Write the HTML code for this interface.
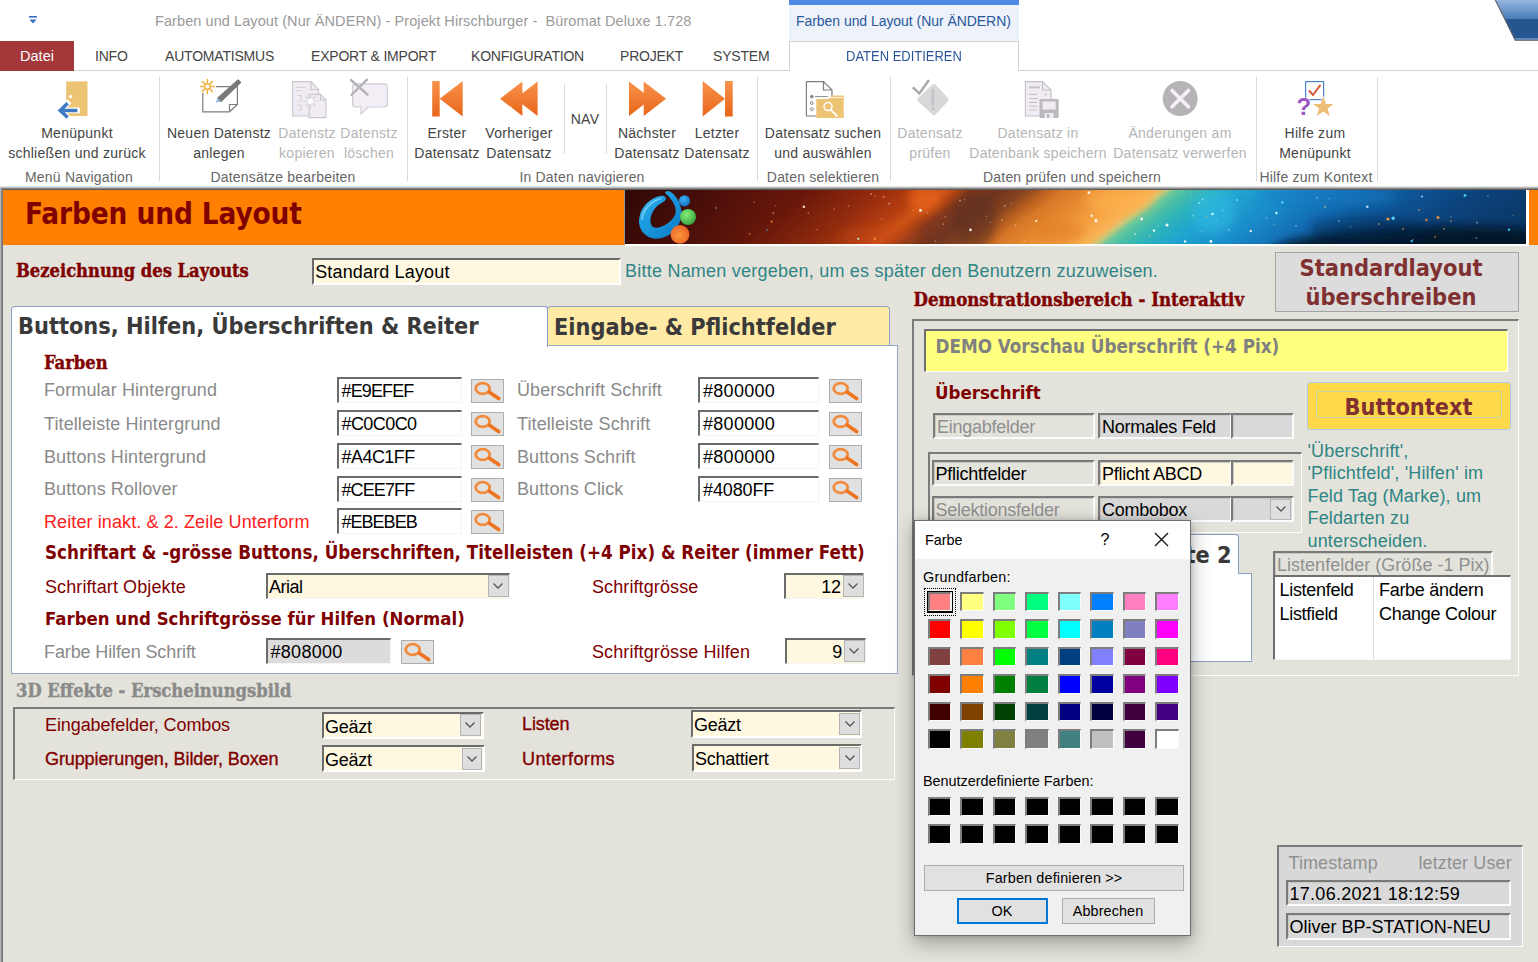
<!DOCTYPE html>
<html lang="de">
<head>
<meta charset="utf-8">
<title>Farben und Layout</title>
<style>
*{box-sizing:border-box;margin:0;padding:0}
html,body{width:1538px;height:962px;overflow:hidden;background:#E3E3DB}
body{position:relative;font-family:"Liberation Sans",sans-serif;color:#000}
.a{position:absolute;white-space:nowrap}
/* ---------- title bar / ribbon ---------- */
#titlebar{left:0;top:0;width:1538px;height:41px;background:#fff}
#ribbon{left:0;top:41px;width:1538px;height:145px;background:#fff}
.seg{font-family:"Liberation Sans",sans-serif}
#wtitle{left:155px;top:13px;font-size:14.5px;color:#9a9a9a;letter-spacing:0.08px}
#ctxhead{left:789px;top:0;width:230px;height:41px;background:#EEF3FB;border-top:5px solid #4F8BE6}
#ctxhead span{left:7px;top:8px;font-size:14px;color:#2B579A;letter-spacing:-0.05px}
#datei{left:0;top:41px;width:74px;height:30px;background:#A4373A;color:#fff;font-size:14.5px;text-align:center;line-height:31px}
.tab{top:41px;height:30px;line-height:31px;font-size:14px;color:#444;letter-spacing:-0.2px}
#tabline{left:0;top:70px;width:1538px;height:1px;background:#D4D4D4}
#acttab{left:789px;top:41px;width:230px;height:30px;background:#fff;border:1px solid #D4D4D4;border-bottom:none;text-align:center;line-height:28.5px;font-size:15px;letter-spacing:0;color:#2B579A}
#acttab span{display:inline-block;transform:scaleX(0.865);transform-origin:50% 50%}
.gsep{top:77px;width:1px;height:104px;background:#DADADA}
.glab{top:168.8px;font-size:14px;letter-spacing:0.2px;color:#666;text-align:center;transform:translateX(-50%)}
.rb{top:122.5px;font-size:14px;letter-spacing:0.27px;line-height:20px;color:#444;text-align:center;transform:translateX(-50%)}
.rb.dis{color:#b5b5b5}
#ribshadow{left:0;top:186px;width:1538px;height:4px;background:linear-gradient(#f6f6f6 0,#d4d4d4 25%,#a4a4a4 50%,#6c6c6c 75%,#4c4c4c 100%)}
.ico{position:absolute}
/* ---------- form ---------- */
#form{left:0;top:190px;width:1538px;height:772px;background:#E3E3DB}
#leftedge{left:0;top:188px;width:3px;height:774px;background:linear-gradient(90deg,#c2c2be 0,#a2a2a0 42%,#727272 58%,#7a7a7a 88%,#bcbcb6 100%)}

.tb{font-family:"DejaVu Sans Condensed","DejaVu Sans",sans-serif;font-weight:700}
.sb{font-family:"DejaVu Serif Condensed","DejaVu Serif",serif;font-weight:700;-webkit-text-stroke:0.4px currentColor}
.th{font-family:"Liberation Sans",sans-serif;font-size:18px;letter-spacing:0.1px}
.dr{color:#800000}
.gr{color:#8a8a8a}
.inp{position:absolute;border-style:solid;border-width:2px 1px 1px 2px;border-color:#6b6b6b #f4f4f4 #f4f4f4 #6b6b6b;background:#fff;font-family:"Liberation Sans",sans-serif;font-size:18px;line-height:24.5px;padding-left:3px;white-space:nowrap;overflow:hidden;letter-spacing:-0.25px}
.cream{background:#FFF8E1}
.hx{letter-spacing:-0.85px}
.e3{border-width:2px;border-color:#6b6b6b #fff #fff #6b6b6b}
.sbtn{position:absolute;width:33px;height:24px;background:#E1E1E1;border:1px solid #ADADAD}
.sbtn svg{position:absolute;left:2px;top:1px}
.dd{position:absolute;background:#DEDEDE;border:1px solid #B4B4B4}
.dd svg{position:absolute;left:50%;top:50%;transform:translate(-50%,-50%)}
#hdr{left:3px;top:190px;width:622px;height:55px;background:#FF8000}
#hdrtxt{left:25px;top:195.5px;font-size:29.4px;line-height:36px;color:#800000;letter-spacing:-0.1px}
#hdrimg{border-left:1.5px solid #8a97a6;left:624px;top:190px;width:902px;height:54px;overflow:hidden;background:#5a120c}
#hdrr{left:1528.7px;top:190px;width:9.3px;height:55px;background:#FF8000}
#tabpage{left:10.5px;top:345.2px;width:887.2px;height:329px;background:#fff;border:1.4px solid #94A7C8}
#tab1{left:11px;top:306px;width:537px;height:41px;background:#fff;border:1px solid #8A9FC4;border-bottom:none;border-radius:4px 4px 0 0}
#tab2{left:546.5px;top:306px;width:343.5px;height:40px;background:#FFEBA6;border:1px solid #8FA3C6;border-bottom:none;border-radius:4px 4px 0 0}
.tabt{font-size:23.3px;line-height:30px;color:#3a3a3a}
.h2{font-size:18.6px;letter-spacing:0.03px;line-height:24px;color:#800000}
.sh{font-size:18.2px;line-height:24px}
.box3d{position:absolute;border-style:solid;border-width:2px 1px 1px 2px;border-color:#7b7b7b #fff #fff #7b7b7b}

.lbl3d{position:absolute;border-style:solid;border-width:2px 2px 2px 2px;border-color:#7a7a7a #fbfbfb #fbfbfb #7a7a7a;font-family:"Liberation Sans",sans-serif;font-size:18px;line-height:24.5px;padding-left:2px;white-space:nowrap;overflow:hidden;letter-spacing:-0.25px;box-shadow:inset 1px 1px 0 #c9c9c4}
#stdbtn{left:1274.5px;top:251.5px;width:244px;height:60px;background:#DCDCDC;border:1px solid #a3a3a3;text-align:center;font-size:23.4px;line-height:29px;color:#803030;padding-top:1px;padding-right:11px}
#demobox{left:912px;top:319px;width:607px;height:357px}
#demohead{left:923.5px;top:329px;width:584px;height:43px;background:#FFFF80;border-style:solid;border-width:2px 1px 1px 2px;border-color:#6f6f6f #fff #fff #6f6f6f}
#btnouter{left:1306.5px;top:381.5px;width:204px;height:48px;background:#FFD94A;border:1.5px solid #A9CBE6;border-radius:3px}
#btninner{left:1316px;top:390.5px;width:186px;height:27px;background:#FFD94A;border:1px solid #C6D3A4;border-radius:2px}

#dlg{left:914.5px;top:521px;width:275px;height:413.8px;background:#F0F0F0;box-shadow:0 0 0 1px #6e6e6e,0 6px 18px 2px rgba(0,0,0,.3),0 0 6px rgba(0,0,0,.22)}
#dlgtitle{left:0;top:0;width:275px;height:37.5px;background:#fff}
.dt{font-family:"Liberation Sans",sans-serif;font-size:14.4px;color:#000;letter-spacing:0.25px}
.sw{position:absolute;width:23.5px;height:19.5px;border-style:solid;border-width:2px 1px 1px 2px;border-color:#7d7d7d #fbfbfb #fbfbfb #7d7d7d}
.wbtn{position:absolute;background:#E1E1E1;border:1px solid #ADADAD;text-align:center;font-family:"Liberation Sans",sans-serif;font-size:14.4px;letter-spacing:0.3px}
</style>
</head>
<body>
<!-- ===== TITLE BAR ===== -->
<div class="a" id="titlebar"></div>
<div class="a seg" id="wtitle">Farben und Layout (Nur ÄNDERN) - Projekt Hirschburger -&nbsp; Büromat Deluxe 1.728</div>
<svg class="ico" style="left:28px;top:15px" width="10" height="10" viewBox="0 0 10 10"><rect x="1" y="1" width="8" height="1.6" fill="#3A6FC4"/><path d="M1.5 4.5h7L5 8.5z" fill="#3A6FC4"/></svg>
<div class="a" id="ctxhead"><span class="a">Farben und Layout (Nur ÄNDERN)</span></div>
<svg class="ico" style="left:1490px;top:0" width="48" height="42" viewBox="1490 0 48 42"><defs><linearGradient id="tr" x1="0" y1="0" x2="0" y2="40.6" gradientUnits="userSpaceOnUse"><stop offset="0" stop-color="#95B5E1"/><stop offset="0.46" stop-color="#4B7CB7"/><stop offset="0.465" stop-color="#26568F"/><stop offset="0.94" stop-color="#26568F"/><stop offset="0.95" stop-color="#6C95CA"/><stop offset="1" stop-color="#6C95CA"/></linearGradient></defs><path d="M1495.3 0H1538V40.2H1515.4Z" fill="url(#tr)"/><path d="M1495.1 -0.4L1515.2 40.2H1538" stroke="#5a5d66" stroke-width="1.1" fill="none"/></svg>
<!-- ===== RIBBON ===== -->
<div class="a" id="ribbon"></div>
<div class="a" id="tabline"></div>
<div class="a seg" id="datei">Datei</div>
<div class="a tab" style="left:95px">INFO</div>
<div class="a tab" style="left:165px">AUTOMATISMUS</div>
<div class="a tab" style="left:311px">EXPORT &amp; IMPORT</div>
<div class="a tab" style="left:471px">KONFIGURATION</div>
<div class="a tab" style="left:620px">PROJEKT</div>
<div class="a tab" style="left:713px">SYSTEM</div>
<div class="a" id="acttab"><span>DATEN EDITIEREN</span></div>
<div class="a rb" style="left:77px">Menüpunkt<br>schließen und zurück</div>
<div class="a rb" style="left:219px">Neuen Datenstz<br>anlegen</div>
<div class="a rb dis" style="left:307px">Datenstz<br>kopieren</div>
<div class="a rb dis" style="left:369px">Datenstz<br>löschen</div>
<div class="a rb" style="left:447px">Erster<br>Datensatz</div>
<div class="a rb" style="left:519px">Vorheriger<br>Datensatz</div>
<div class="a rb" style="left:647px">Nächster<br>Datensatz</div>
<div class="a rb" style="left:717px">Letzter<br>Datensatz</div>
<div class="a rb" style="left:823px">Datensatz suchen<br>und auswählen</div>
<div class="a rb dis" style="left:930px">Datensatz<br>prüfen</div>
<div class="a rb dis" style="left:1038px">Datensatz in<br>Datenbank speichern</div>
<div class="a rb dis" style="left:1180px">Änderungen am<br>Datensatz verwerfen</div>
<div class="a rb" style="left:1315px">Hilfe zum<br>Menüpunkt</div>
<div class="a rb" style="left:585px;top:109px">NAV</div>
<div class="a gsep" style="left:159px"></div>
<div class="a gsep" style="left:407px"></div>
<div class="a gsep" style="left:757px"></div>
<div class="a gsep" style="left:890px"></div>
<div class="a gsep" style="left:1256px"></div>
<div class="a gsep" style="left:1377px"></div>
<div class="a gsep" style="left:564px;top:84px;height:70px"></div>
<div class="a gsep" style="left:606px;top:84px;height:70px"></div>
<div class="a glab" style="left:79px">Menü Navigation</div>
<div class="a glab" style="left:283px">Datensätze bearbeiten</div>
<div class="a glab" style="left:582px">In Daten navigieren</div>
<div class="a glab" style="left:823px">Daten selektieren</div>
<div class="a glab" style="left:1072px">Daten prüfen und speichern</div>
<div class="a glab" style="left:1316px">Hilfe zum Kontext</div>
<!-- RIBBON-BUTTONS -->
<svg class="ico" style="left:0;top:0" width="1538" height="190" viewBox="0 0 1538 190">
<defs>
<linearGradient id="og" x1="0" y1="0" x2="0" y2="1"><stop offset="0" stop-color="#F9924A"/><stop offset="1" stop-color="#E8661A"/></linearGradient>
</defs>
<!-- door + arrow -->
<rect x="66.2" y="81.4" width="21.3" height="34.6" fill="#EDC374"/>
<circle cx="70.6" cy="96.6" r="1.7" fill="#fff"/>
<path d="M67.6 103.2L60.2 110.4L67.6 117.6M61 110.4H77" fill="none" stroke="#fff" stroke-width="5.6" stroke-linecap="square"/><path d="M67.6 103.2L60.2 110.4L67.6 117.6M61 110.4H77.4" fill="none" stroke="#3E7BC4" stroke-width="3.5" stroke-linecap="butt" stroke-linejoin="miter"/>
<!-- new record -->
<path d="M216 86.6H237.4V104.5L229.5 111.8H202.8V93" fill="none" stroke="#7d7d7d" stroke-width="1.2"/>
<path d="M237.4 104.5H229.5V111.8" fill="none" stroke="#7d7d7d" stroke-width="1.2"/>
<g stroke="#F0B040" stroke-width="1.5" stroke-linecap="round"><path d="M207.4 79.6V93.4M200.5 86.5H214.3M202.5 81.6L212.3 91.4M212.3 81.6L202.5 91.4"/></g>
<circle cx="207.4" cy="86.5" r="2.6" fill="#fff" stroke="#F0B040" stroke-width="1.2"/>
<path d="M238.2 80.2 L240.4 82.4 L221 101.2 L218 98.2Z" fill="#7a7a7a" stroke="#7a7a7a" stroke-width="1.6" stroke-linejoin="round"/>
<path d="M218 98.2L215.4 102.8L221 101.2Z" fill="#8fb4e0"/>
<!-- copy (disabled) -->
<path d="M292.6 81.6H311L318.6 89.5V116H292.6Z" fill="#F1ECF4" stroke="#c9c7ca" stroke-width="1.1"/>
<path d="M311 81.6V89.5H318.6" fill="none" stroke="#c9c7ca" stroke-width="1.1"/>
<g fill="none" stroke="#d4d1d6" stroke-width="1.1"><path d="M296 87.5H306M296 90.8H303M297 95.5H301V101H297M297 105H301V110H297"/></g>
<path d="M309 94.4H320.5L326 100V117.6H309Z" fill="#F1ECF4" stroke="#c9c7ca" stroke-width="1.1"/>
<path d="M320.5 94.4V100H326" fill="none" stroke="#c9c7ca" stroke-width="1.1"/>
<g stroke="#dcd9de" stroke-width="1.6" stroke-linecap="round"><path d="M310.5 94.5V108M303.7 101.2H317.3M305.7 96.4L315.3 106M315.3 96.4L305.7 106"/></g>
<circle cx="310.5" cy="101.2" r="2.6" fill="#fff"/>
<!-- delete (disabled) -->
<path d="M355.5 83.8H384.3Q387.3 83.8 387.3 86.8V104Q387.3 107 384.3 107H368L361 114V107H355.5Q352.6 107 352.6 104V86.8Q352.6 83.8 355.5 83.8Z" fill="#F3EEF6" stroke="#cfccd1" stroke-width="1.2"/>
<path d="M351 80L367.5 94.6M367 79.6L351.4 95" stroke="#b4b2b5" stroke-width="2.4" stroke-linecap="round"/>
<!-- first -->
<rect x="432.2" y="81" width="7.5" height="35.5" fill="url(#og)"/>
<path d="M462.7 81V116.5L439.7 98.7Z" fill="url(#og)"/>
<!-- previous -->
<path d="M522.4 81.5V116L500.1 98.7Z" fill="url(#og)"/>
<path d="M537.6 81.5V116L515.3 98.7Z" fill="url(#og)"/>
<!-- next -->
<path d="M629 81.5V116L651.3 98.7Z" fill="url(#og)"/>
<path d="M643.7 81.5V116L666 98.7Z" fill="url(#og)"/>
<!-- last -->
<path d="M702.7 81V116.5L725 98.7Z" fill="url(#og)"/>
<rect x="725" y="81" width="7.7" height="35.5" fill="url(#og)"/>
<!-- search -->
<path d="M806.4 81.6H823.5L832 90V96M806.4 81.6V116H816" fill="none" stroke="#7d7d7d" stroke-width="1.2"/>
<path d="M823.5 81.6V90H832" fill="none" stroke="#7d7d7d" stroke-width="1.2"/>
<g fill="none" stroke="#8a8a8a" stroke-width="1"><circle cx="811.8" cy="96.6" r="1.4" fill="#8a8a8a"/><circle cx="811.8" cy="103" r="1.4"/><circle cx="811.8" cy="109.2" r="1.4"/><path d="M815 96.6H828"/></g>
<path d="M816.3 99H828L831.5 95.6H843.7V118H816.3Z" fill="#EDC374"/>
<path d="M829 97.6H842.6" stroke="#fff" stroke-width="0.9"/>
<circle cx="828" cy="106.6" r="4" fill="none" stroke="#fff" stroke-width="1.5"/>
<path d="M831 109.8L837 116" stroke="#fff" stroke-width="1.8" stroke-linecap="round"/>
<!-- check (disabled) -->
<path d="M932.7 84.5Q934 83.2 935.3 84.5L948.2 98.3Q949.4 99.6 948.2 100.9L935.3 114.8Q934 116.2 932.7 114.8L917.8 100.9Q916.5 99.6 917.8 98.3Z" fill="#DAD7DB"/>
<path d="M932.8 90V104" stroke="#c4c2c5" stroke-width="2.6" stroke-linecap="round"/><circle cx="932.8" cy="108.6" r="1.7" fill="#c4c2c5"/>
<path d="M912.8 87.4L919.3 93.5L929 80" fill="none" stroke="#a9a7aa" stroke-width="2.4"/>
<!-- save (disabled) -->
<path d="M1025.4 81.6H1042.5L1051 90V116H1025.4Z" fill="#F1ECF4" stroke="#c2c0c3" stroke-width="1.1"/>
<path d="M1042.5 81.6V90H1051" fill="none" stroke="#c2c0c3" stroke-width="1.1"/>
<g stroke="#c4c2c5" stroke-width="1.1"><path d="M1029 87.4H1040" stroke-width="2"/><path d="M1029 94.5H1037M1029 98.5H1038M1029 102.4H1037M1029 106.2H1037M1029 110H1037M1044 94.5H1047"/></g>
<rect x="1039.5" y="99" width="19.2" height="19" rx="1" fill="#BAB8BB"/>
<rect x="1042.5" y="101.5" width="13.2" height="8" fill="#F1ECF4"/>
<rect x="1044.6" y="113" width="9" height="5" fill="#F1ECF4"/><rect x="1047" y="114" width="2.2" height="4" fill="#BAB8BB"/>
<!-- cancel (disabled) -->
<circle cx="1180.2" cy="98.6" r="17.5" fill="#B6B3B6"/>
<path d="M1172 90.4L1188.4 106.8M1188.4 90.4L1172 106.8" stroke="#F6F0F8" stroke-width="3.6" stroke-linecap="round"/>
<!-- help -->
<rect x="1305.6" y="81.6" width="18" height="18" fill="#fff" stroke="#4A86CE" stroke-width="1.2"/>
<path d="M1309 90.5L1313 95L1320.5 84.8" fill="none" stroke="#D9583A" stroke-width="2"/>
<path d="M1323.3 96.6L1326 104H1333.6L1327.5 108.6L1329.8 116L1323.3 111.5L1316.8 116L1319.1 108.6L1313 104H1320.6Z" fill="#EDBC75" stroke="#fff" stroke-width="1" paint-order="stroke"/>
<text x="1296.6" y="115.2" font-family="Liberation Sans, sans-serif" font-weight="700" font-size="24" fill="#9A57C2" stroke="#fff" stroke-width="1.2" paint-order="stroke">?</text>
</svg>
<!-- RIBBON-ICONS -->
<div class="a" id="ribshadow"></div>
<!-- ===== FORM ===== -->
<div class="a" id="form"></div>
<div class="a" id="leftedge"></div>
<div class="a" id="hdr"></div>
<div class="a tb" id="hdrtxt">Farben und Layout</div>
<div class="a" id="hdrimg"><svg class="ico" style="left:-1px;top:0" width="902" height="54" viewBox="625 190 902 54" preserveAspectRatio="none">
<defs>
<linearGradient id="gx" gradientUnits="userSpaceOnUse" x1="590" y1="190" x2="952.6" y2="660"><stop offset="0.0000" stop-color="#3c0c0a"/><stop offset="0.0741" stop-color="#4e100b"/><stop offset="0.1307" stop-color="#5c130b"/><stop offset="0.2233" stop-color="#70190b"/><stop offset="0.3056" stop-color="#9a2e0e"/><stop offset="0.3416" stop-color="#b23c10"/><stop offset="0.3673" stop-color="#cf5216"/><stop offset="0.3807" stop-color="#b04414"/><stop offset="0.3951" stop-color="#84381c"/><stop offset="0.4239" stop-color="#6e3520"/><stop offset="0.4506" stop-color="#884420"/><stop offset="0.4712" stop-color="#b8601f"/><stop offset="0.4897" stop-color="#d87828"/><stop offset="0.5195" stop-color="#e68a30"/><stop offset="0.5607" stop-color="#f6a444"/><stop offset="0.5844" stop-color="#f8b458"/><stop offset="0.5936" stop-color="#c8c878"/><stop offset="0.6029" stop-color="#6cc89a"/><stop offset="0.6173" stop-color="#48bea6"/><stop offset="0.6399" stop-color="#2cb2bc"/><stop offset="0.6708" stop-color="#20a4d0"/><stop offset="0.7222" stop-color="#198dca"/><stop offset="0.7840" stop-color="#126cb2"/><stop offset="0.8457" stop-color="#0e5698"/><stop offset="0.9074" stop-color="#0c447e"/><stop offset="1.0000" stop-color="#0a3868"/></linearGradient>
<linearGradient id="gv" x1="0" y1="0" x2="0" y2="1"><stop offset="0" stop-color="#000" stop-opacity="0"/><stop offset="0.45" stop-color="#000814" stop-opacity="0.12"/><stop offset="1" stop-color="#000814" stop-opacity="0.62"/></linearGradient>
<linearGradient id="gl" x1="0" y1="0" x2="1" y2="0"><stop offset="0" stop-color="#200404" stop-opacity="0.55"/><stop offset="0.5" stop-color="#200404" stop-opacity="0.15"/><stop offset="1" stop-color="#200404" stop-opacity="0"/></linearGradient>
<radialGradient id="gb"><stop offset="0" stop-color="#fff" stop-opacity=".9"/><stop offset="1" stop-color="#fff" stop-opacity="0"/></radialGradient>
<linearGradient id="sw" x1="0" y1="0" x2="1" y2="1"><stop offset="0" stop-color="#5cc8f4"/><stop offset="0.35" stop-color="#1e9fe2"/><stop offset="1" stop-color="#0a78c6"/></linearGradient>
<radialGradient id="bb" cx="0.4" cy="0.35" r="0.7"><stop offset="0" stop-color="#3fb0ee"/><stop offset="1" stop-color="#0f6fc0"/></radialGradient>
<radialGradient id="bg" cx="0.4" cy="0.35" r="0.7"><stop offset="0" stop-color="#86f07a"/><stop offset="1" stop-color="#35a03c"/></radialGradient>
<radialGradient id="bo" cx="0.45" cy="0.55" r="0.7"><stop offset="0" stop-color="#f99a3c"/><stop offset="0.7" stop-color="#f06a2a"/><stop offset="1" stop-color="#d8481c"/></radialGradient>
<filter id="bl" filterUnits="userSpaceOnUse" x="500" y="100" width="1200" height="260"><feGaussianBlur stdDeviation="5"/></filter>
<filter id="b1" x="-50%" y="-50%" width="200%" height="200%"><feGaussianBlur stdDeviation="0.5"/></filter>
</defs>
<rect x="625" y="190" width="902" height="54" fill="url(#gx)"/>
<g filter="url(#bl)">
<ellipse cx="925" cy="198" rx="16" ry="14" fill="#e8641a" opacity=".75"/>
<ellipse cx="880" cy="236" rx="40" ry="9" fill="#c8480f" opacity=".5"/>
<ellipse cx="975" cy="220" rx="22" ry="30" fill="#5c3220" opacity=".55"/>
<ellipse cx="1120" cy="200" rx="34" ry="14" fill="#ffb250" opacity=".6"/>
<ellipse cx="1060" cy="232" rx="26" ry="12" fill="#e07a26" opacity=".5"/>
<ellipse cx="1215" cy="212" rx="22" ry="22" fill="#30c0e8" opacity=".45"/>
<ellipse cx="1330" cy="196" rx="70" ry="10" fill="#1a78c0" opacity=".5"/>
</g>
<g filter="url(#bl)"><ellipse cx="1450" cy="254" rx="180" ry="28" fill="#000a18" opacity=".8"/><ellipse cx="1370" cy="228" rx="60" ry="12" fill="#04284c" opacity=".45"/></g>
<rect x="625" y="190" width="260" height="54" fill="url(#gl)"/>
<g filter="url(#b1)"><circle cx="1090" cy="192.7" r="1.4" fill="#fff" opacity="0.9"/><circle cx="1097" cy="220.7" r="1.6" fill="#fff" opacity="0.9"/><circle cx="1092.7" cy="215.8" r="1.2" fill="#fff" opacity="0.9"/><circle cx="1142.7" cy="219" r="1.4" fill="#fff" opacity="0.9"/><circle cx="1168" cy="225" r="1.6" fill="#fff" opacity="0.9"/><circle cx="1155" cy="230.5" r="1.3" fill="#fff" opacity="0.9"/><circle cx="1213.4" cy="214" r="1.3" fill="#e8ffff" opacity="0.9"/><circle cx="1251.8" cy="231" r="1.3" fill="#eee" opacity="0.9"/><circle cx="1277.4" cy="213" r="1.2" fill="#dff" opacity="0.9"/><circle cx="1283.3" cy="202.5" r="1.3" fill="#5fe0ff" opacity="0.9"/><circle cx="1368.3" cy="206.7" r="1.3" fill="#cfe8ff" opacity="0.9"/><circle cx="1389" cy="219" r="1.6" fill="#ffa040" opacity="0.9"/><circle cx="1394.2" cy="218.2" r="1.7" fill="#60e0ff" opacity="0.9"/><circle cx="1439" cy="217.5" r="1.5" fill="#ff9a3a" opacity="0.9"/><circle cx="1427.4" cy="220" r="1.2" fill="#f08a30" opacity="0.9"/><circle cx="1466" cy="195.5" r="1.4" fill="#50d8ff" opacity="0.9"/><circle cx="1423" cy="196.5" r="1.1" fill="#9cf" opacity="0.9"/><circle cx="1510" cy="229.8" r="1.2" fill="#40c8f0" opacity="0.9"/><circle cx="1412.7" cy="241" r="1.2" fill="#40c8f0" opacity="0.9"/><circle cx="1477.4" cy="238" r="1.0" fill="#60b0e0" opacity="0.6"/><circle cx="717.2" cy="208" r="1.0" fill="#8aa8d8" opacity="0.6"/><circle cx="804.9" cy="206.8" r="1.3" fill="#ffe8c8" opacity="0.9"/><circle cx="884.7" cy="197" r="1.0" fill="#ffb060" opacity="0.6"/><circle cx="872" cy="194" r="0.9" fill="#ffc080" opacity="0.6"/><circle cx="921.5" cy="210.4" r="1.4" fill="#fff" opacity="0.9"/><circle cx="768" cy="229.9" r="1.0" fill="#70a8c8" opacity="0.6"/><circle cx="859.3" cy="238.8" r="1.1" fill="#cfe" opacity="0.9"/><circle cx="875.8" cy="238.8" r="1.2" fill="#ff9a40" opacity="0.9"/><circle cx="971.5" cy="229.9" r="1.3" fill="#fff" opacity="0.9"/><circle cx="961" cy="200.5" r="1.0" fill="#e0c8b0" opacity="0.6"/><circle cx="1037.3" cy="220.9" r="1.2" fill="#ffe8d0" opacity="0.9"/><circle cx="1005.9" cy="206" r="1.0" fill="#c8c0d0" opacity="0.6"/><circle cx="750.7" cy="233.8" r="1.0" fill="#ff8a30" opacity="0.6"/><circle cx="772.6" cy="221.5" r="1.1" fill="#ff8a30" opacity="0.9"/><circle cx="1212" cy="241.5" r="1.4" fill="#fff" opacity="0.9"/><circle cx="1186" cy="241.5" r="1.2" fill="#fff" opacity="0.9"/><circle cx="1136" cy="234" r="1.0" fill="#ffe" opacity="0.6"/><circle cx="1200" cy="203" r="1.0" fill="#cff" opacity="0.6"/><circle cx="1230" cy="230" r="1.0" fill="#9ef" opacity="0.6"/><circle cx="1238" cy="200" r="1.0" fill="#bef" opacity="0.6"/><circle cx="1318" cy="198" r="1.0" fill="#9cf" opacity="0.6"/><circle cx="1326" cy="207" r="1.0" fill="#fc8" opacity="0.6"/><circle cx="1380" cy="224" r="1.0" fill="#f93" opacity="0.6"/><circle cx="1404" cy="229" r="1.0" fill="#f93" opacity="0.6"/><circle cx="1445" cy="229" r="1.0" fill="#f93" opacity="0.6"/><circle cx="1420" cy="210" r="0.9" fill="#fa5" opacity="0.6"/><circle cx="1452" cy="221" r="0.9" fill="#f93" opacity="0.6"/><circle cx="1436" cy="237" r="0.9" fill="#f93" opacity="0.6"/><circle cx="1340" cy="221" r="0.9" fill="#9cf" opacity="0.6"/><circle cx="1297" cy="226" r="0.9" fill="#9cf" opacity="0.6"/><circle cx="965.5" cy="199.5" r="0.53" fill="#ffd0a0" opacity="0.6"/><circle cx="1139.4" cy="210.3" r="0.86" fill="#ffd0a0" opacity="0.6"/><circle cx="876.1" cy="196.3" r="0.53" fill="#fff" opacity="0.6"/><circle cx="774.4" cy="213.2" r="0.88" fill="#ffd0a0" opacity="0.6"/><circle cx="1217.1" cy="221.1" r="0.73" fill="#bfefff" opacity="0.6"/><circle cx="1025.3" cy="240.8" r="0.72" fill="#ffd0a0" opacity="0.6"/><circle cx="809.2" cy="213.0" r="0.73" fill="#ffd0a0" opacity="0.6"/><circle cx="1159.4" cy="226.1" r="0.73" fill="#bfefff" opacity="0.6"/><circle cx="1223.9" cy="210.6" r="0.73" fill="#bfefff" opacity="0.6"/><circle cx="1207.6" cy="216.8" r="0.81" fill="#ffb060" opacity="0.6"/><circle cx="1081.8" cy="238.2" r="0.62" fill="#ffb070" opacity="0.6"/><circle cx="1351.4" cy="226.9" r="0.53" fill="#8fd8ff" opacity="0.6"/><circle cx="946.2" cy="216.8" r="0.79" fill="#ffb070" opacity="0.6"/><circle cx="936.1" cy="241.0" r="0.7" fill="#ffd0a0" opacity="0.6"/><circle cx="835.3" cy="209.1" r="0.67" fill="#fff" opacity="0.6"/><circle cx="1488.9" cy="195.9" r="0.64" fill="#fff" opacity="0.6"/><circle cx="987.1" cy="216.8" r="0.53" fill="#fff" opacity="0.6"/><circle cx="776.7" cy="205.5" r="0.52" fill="#ffd0a0" opacity="0.6"/><circle cx="1275.2" cy="224.4" r="0.61" fill="#ffb060" opacity="0.6"/><circle cx="1016.3" cy="225.4" r="0.88" fill="#ffd0a0" opacity="0.6"/><circle cx="991.5" cy="222.5" r="0.52" fill="#fff" opacity="0.6"/><circle cx="1330.0" cy="198.5" r="0.66" fill="#8fd8ff" opacity="0.6"/><circle cx="1451.8" cy="216.8" r="0.68" fill="#8fd8ff" opacity="0.6"/><circle cx="1150.5" cy="236.2" r="0.85" fill="#ffb060" opacity="0.6"/><circle cx="928.3" cy="212.8" r="0.77" fill="#ffb070" opacity="0.6"/><circle cx="1012.0" cy="203.5" r="0.57" fill="#ffd0a0" opacity="0.6"/><circle cx="890.2" cy="203.7" r="0.83" fill="#fff" opacity="0.6"/><circle cx="849.5" cy="206.1" r="0.67" fill="#ffe8d0" opacity="0.6"/><circle cx="1002.8" cy="220.3" r="0.78" fill="#ffe8d0" opacity="0.6"/><circle cx="1122.7" cy="222.9" r="0.68" fill="#ffd0a0" opacity="0.6"/><circle cx="1414.2" cy="239.6" r="0.66" fill="#ffb060" opacity="0.6"/><circle cx="1023.2" cy="216.1" r="0.52" fill="#fff" opacity="0.6"/><circle cx="755.2" cy="202.4" r="0.54" fill="#ffe8d0" opacity="0.6"/><circle cx="1192.6" cy="197.1" r="0.71" fill="#8fd8ff" opacity="0.6"/><circle cx="1478.1" cy="222.7" r="0.85" fill="#bfefff" opacity="0.6"/><circle cx="1203.5" cy="199.4" r="0.88" fill="#fff" opacity="0.6"/><circle cx="1193.9" cy="215.7" r="0.84" fill="#bfefff" opacity="0.6"/><circle cx="1514.3" cy="215.3" r="0.62" fill="#ffb060" opacity="0.6"/><circle cx="818.2" cy="229.5" r="0.69" fill="#ffb070" opacity="0.6"/><circle cx="1267.5" cy="217.8" r="0.88" fill="#8fd8ff" opacity="0.6"/><circle cx="1133.2" cy="199.3" r="0.8" fill="#ffd0a0" opacity="0.6"/><circle cx="944.4" cy="224.1" r="0.78" fill="#ffd0a0" opacity="0.6"/><circle cx="914.1" cy="210.3" r="0.64" fill="#ffe8d0" opacity="0.6"/><circle cx="882.7" cy="219.1" r="0.75" fill="#ffb070" opacity="0.6"/><circle cx="1202.8" cy="231.4" r="0.82" fill="#8fd8ff" opacity="0.6"/></g>
<path d="M666.3 193.2C665.8 191.2 668.5 190.3 671 191.5C677 195 681.5 202 682.6 211.8C683.5 222 676 232 668 236C662 239 654 240 648 236C641 231 639 224 640.5 217C642 207 651 198 661 196C665 195.3 667.5 197 666.8 199.5C666 201.5 663 202.5 660 204.5C654 209 651 216 651.5 222C652 227 655.5 228.5 659.5 227.5C668 225.5 676 219 676.8 211.8C677 205 672 198 666.3 193.2Z" fill="url(#sw)"/>
<path d="M643 219C644 210 652 201 662 198.5" fill="none" stroke="#8fe0ff" stroke-width="1.6" stroke-linecap="round" opacity=".7" filter="url(#b1)"/>
<circle cx="685.5" cy="200.8" r="5.6" fill="url(#bb)"/>
<circle cx="689" cy="217" r="8" fill="url(#bg)"/>
<circle cx="681" cy="234.4" r="9.4" fill="url(#bo)"/>
</svg></div>
<div class="a" id="hdrr"></div>
<div class="a" style="left:625px;top:243.6px;width:903.7px;height:2.2px;background:#fff"></div><div class="a" style="left:1526.3px;top:190px;width:2.4px;height:55px;background:#fff"></div>
<div class="a sb dr sh" style="left:16px;top:259px">Bezeichnung des Layouts</div>
<div class="inp cream e3" style="left:311.7px;top:258px;width:309px;height:26.8px;line-height:25px;letter-spacing:0.15px;padding-left:1.5px">Standard Layout</div>
<div class="a th" style="left:625px;top:259px;color:#2F8585;line-height:24px;letter-spacing:0.23px">Bitte Namen vergeben, um es später den Benutzern zuzuweisen.</div>
<!-- FORM-HEADER -->
<div class="a" id="tab2"></div><div class="a tb tabt" style="left:554px;top:311.5px">Eingabe- &amp; Pflichtfelder</div>
<div class="a" id="tabpage"></div><div class="a" id="tab1"></div><div class="a tb tabt" style="left:18px;top:311px">Buttons, Hilfen, Überschriften &amp; Reiter</div>
<div class="a sb dr sh" style="left:44px;top:351px">Farben</div>
<div class="a th gr" style="left:44px;top:378.0px;line-height:24px;">Formular Hintergrund</div><div class="inp hx" style="left:336.5px;top:376.5px;width:125px;height:26px;letter-spacing:-0.86px">#E9EFEF</div><div class="sbtn" style="left:471px;top:378.5px"><svg width="28" height="20" viewBox="0 0 28 20"><ellipse cx="8.7" cy="7.5" rx="7" ry="5.3" fill="none" stroke="#F28A3C" stroke-width="2.8"/><path d="M15.4 11.2L24.6 17.6" stroke="#EE7420" stroke-width="3.6" stroke-linecap="round"/></svg></div><div class="a th gr" style="left:517px;top:378.0px;line-height:24px">Überschrift Schrift</div><div class="inp hx" style="left:698px;top:376.5px;width:121px;height:26px;letter-spacing:0.29px">#800000</div><div class="sbtn" style="left:828.5px;top:378.5px"><svg width="28" height="20" viewBox="0 0 28 20"><ellipse cx="8.7" cy="7.5" rx="7" ry="5.3" fill="none" stroke="#F28A3C" stroke-width="2.8"/><path d="M15.4 11.2L24.6 17.6" stroke="#EE7420" stroke-width="3.6" stroke-linecap="round"/></svg></div>
<div class="a th gr" style="left:44px;top:411.9px;line-height:24px;">Titelleiste Hintergrund</div><div class="inp hx" style="left:336.5px;top:410.4px;width:125px;height:26px;letter-spacing:-0.58px">#C0C0C0</div><div class="sbtn" style="left:471px;top:412.4px"><svg width="28" height="20" viewBox="0 0 28 20"><ellipse cx="8.7" cy="7.5" rx="7" ry="5.3" fill="none" stroke="#F28A3C" stroke-width="2.8"/><path d="M15.4 11.2L24.6 17.6" stroke="#EE7420" stroke-width="3.6" stroke-linecap="round"/></svg></div><div class="a th gr" style="left:517px;top:411.9px;line-height:24px">Titelleiste Schrift</div><div class="inp hx" style="left:698px;top:410.4px;width:121px;height:26px;letter-spacing:0.29px">#800000</div><div class="sbtn" style="left:828.5px;top:412.4px"><svg width="28" height="20" viewBox="0 0 28 20"><ellipse cx="8.7" cy="7.5" rx="7" ry="5.3" fill="none" stroke="#F28A3C" stroke-width="2.8"/><path d="M15.4 11.2L24.6 17.6" stroke="#EE7420" stroke-width="3.6" stroke-linecap="round"/></svg></div>
<div class="a th gr" style="left:44px;top:444.7px;line-height:24px;">Buttons Hintergrund</div><div class="inp hx" style="left:336.5px;top:443.2px;width:125px;height:26px;letter-spacing:-0.55px">#A4C1FF</div><div class="sbtn" style="left:471px;top:445.2px"><svg width="28" height="20" viewBox="0 0 28 20"><ellipse cx="8.7" cy="7.5" rx="7" ry="5.3" fill="none" stroke="#F28A3C" stroke-width="2.8"/><path d="M15.4 11.2L24.6 17.6" stroke="#EE7420" stroke-width="3.6" stroke-linecap="round"/></svg></div><div class="a th gr" style="left:517px;top:444.7px;line-height:24px">Buttons Schrift</div><div class="inp hx" style="left:698px;top:443.2px;width:121px;height:26px;letter-spacing:0.29px">#800000</div><div class="sbtn" style="left:828.5px;top:445.2px"><svg width="28" height="20" viewBox="0 0 28 20"><ellipse cx="8.7" cy="7.5" rx="7" ry="5.3" fill="none" stroke="#F28A3C" stroke-width="2.8"/><path d="M15.4 11.2L24.6 17.6" stroke="#EE7420" stroke-width="3.6" stroke-linecap="round"/></svg></div>
<div class="a th gr" style="left:44px;top:477.1px;line-height:24px;">Buttons Rollover</div><div class="inp hx" style="left:336.5px;top:475.6px;width:125px;height:26px;letter-spacing:-0.9px">#CEE7FF</div><div class="sbtn" style="left:471px;top:477.6px"><svg width="28" height="20" viewBox="0 0 28 20"><ellipse cx="8.7" cy="7.5" rx="7" ry="5.3" fill="none" stroke="#F28A3C" stroke-width="2.8"/><path d="M15.4 11.2L24.6 17.6" stroke="#EE7420" stroke-width="3.6" stroke-linecap="round"/></svg></div><div class="a th gr" style="left:517px;top:477.1px;line-height:24px">Buttons Click</div><div class="inp hx" style="left:698px;top:475.6px;width:121px;height:26px;letter-spacing:-0.12px">#4080FF</div><div class="sbtn" style="left:828.5px;top:477.6px"><svg width="28" height="20" viewBox="0 0 28 20"><ellipse cx="8.7" cy="7.5" rx="7" ry="5.3" fill="none" stroke="#F28A3C" stroke-width="2.8"/><path d="M15.4 11.2L24.6 17.6" stroke="#EE7420" stroke-width="3.6" stroke-linecap="round"/></svg></div>
<div class="a th gr" style="left:44px;top:509.7px;line-height:24px;color:#FF2020">Reiter inakt. &amp; 2. Zeile Unterform</div><div class="inp hx" style="left:336.5px;top:508.2px;width:125px;height:26px;letter-spacing:-0.98px">#EBEBEB</div><div class="sbtn" style="left:471px;top:510.2px"><svg width="28" height="20" viewBox="0 0 28 20"><ellipse cx="8.7" cy="7.5" rx="7" ry="5.3" fill="none" stroke="#F28A3C" stroke-width="2.8"/><path d="M15.4 11.2L24.6 17.6" stroke="#EE7420" stroke-width="3.6" stroke-linecap="round"/></svg></div>
<div class="a tb h2" style="left:45px;top:541px">Schriftart &amp; -grösse Buttons, Überschriften, Titelleisten (+4 Pix) &amp; Reiter (immer Fett)</div>
<div class="a th dr" style="left:45px;top:575px;line-height:24px">Schriftart Objekte</div>
<div class="inp cream" style="left:265.5px;top:573px;width:244px;height:26px;padding-left:1.5px;letter-spacing:-0.5px">Arial</div><div class="dd" style="left:487.6px;top:575px;width:21px;height:22.4px"><svg width="11" height="7" viewBox="0 0 11 7"><path d="M1 1L5.5 5.5L10 1" fill="none" stroke="#555" stroke-width="1.3"/></svg></div>
<div class="a th dr" style="left:592px;top:575px;line-height:24px">Schriftgrösse</div>
<div class="inp cream" style="left:783.8px;top:572.6px;width:80.5px;height:26.4px;text-align:right;padding-right:22.5px">12</div><div class="dd" style="left:843px;top:575px;width:20.5px;height:22.4px"><svg width="11" height="7" viewBox="0 0 11 7"><path d="M1 1L5.5 5.5L10 1" fill="none" stroke="#555" stroke-width="1.3"/></svg></div>
<div class="a tb h2" style="left:45px;top:606.5px;font-size:18.4px">Farben und Schriftgrösse für Hilfen (Normal)</div>
<div class="a th gr" style="left:44px;top:639.5px;line-height:24px;letter-spacing:-0.12px">Farbe Hilfen Schrift</div>
<div class="inp hx" style="left:265.5px;top:638px;width:125px;height:26px;background:#DCDCDC;letter-spacing:0.29px">#808000</div><div class="sbtn" style="left:401px;top:640px"><svg width="28" height="20" viewBox="0 0 28 20"><ellipse cx="8.7" cy="7.5" rx="7" ry="5.3" fill="none" stroke="#F28A3C" stroke-width="2.8"/><path d="M15.4 11.2L24.6 17.6" stroke="#EE7420" stroke-width="3.6" stroke-linecap="round"/></svg></div>
<div class="a th dr" style="left:592px;top:639.5px;line-height:24px">Schriftgrösse Hilfen</div>
<div class="inp cream" style="left:785px;top:637.6px;width:80.5px;height:26px;text-align:right;padding-right:22.5px">9</div><div class="dd" style="left:844.2px;top:640px;width:20.5px;height:22px"><svg width="11" height="7" viewBox="0 0 11 7"><path d="M1 1L5.5 5.5L10 1" fill="none" stroke="#555" stroke-width="1.3"/></svg></div>
<div class="a sb sh" style="left:16px;top:679px;color:#8a8a8a">3D Effekte - Erscheinungsbild</div>
<div class="box3d" style="left:13px;top:707px;width:882px;height:73px"></div>
<div class="a th dr" style="left:45px;top:712.5px;line-height:24px;letter-spacing:-0.1px">Eingabefelder, Combos</div>
<div class="a th dr" style="left:45px;top:747px;line-height:24px;letter-spacing:-0.1px;-webkit-text-stroke:0.35px #800000">Gruppierungen, Bilder, Boxen</div>
<div class="a th dr" style="left:522px;top:711.5px;line-height:24px;letter-spacing:-0.1px;-webkit-text-stroke:0.35px #800000">Listen</div>
<div class="a th dr" style="left:522px;top:746.5px;line-height:24px;letter-spacing:0.4px;-webkit-text-stroke:0.35px #800000">Unterforms</div>
<div class="inp cream e3" style="left:321.5px;top:711.7px;width:162px;height:27px;line-height:26.5px;padding-left:1.5px">Geäzt</div><div class="dd" style="left:460.2px;top:714.2px;width:20.6px;height:22px"><svg width="11" height="7" viewBox="0 0 11 7"><path d="M1 1L5.5 5.5L10 1" fill="none" stroke="#555" stroke-width="1.3"/></svg></div>
<div class="inp cream e3" style="left:321.5px;top:745.4px;width:163.3px;height:26.8px;line-height:26.3px;padding-left:1.5px">Geäzt</div><div class="dd" style="left:461.8px;top:748px;width:20.6px;height:22px"><svg width="11" height="7" viewBox="0 0 11 7"><path d="M1 1L5.5 5.5L10 1" fill="none" stroke="#555" stroke-width="1.3"/></svg></div>
<div class="inp cream e3" style="left:690.5px;top:710.3px;width:171.7px;height:28px;line-height:27.5px;padding-left:1.5px">Geäzt</div><div class="dd" style="left:839.3px;top:713.3px;width:20.6px;height:22px"><svg width="11" height="7" viewBox="0 0 11 7"><path d="M1 1L5.5 5.5L10 1" fill="none" stroke="#555" stroke-width="1.3"/></svg></div>
<div class="inp cream e3" style="left:691.5px;top:744.3px;width:170.7px;height:27.7px;line-height:27.2px;padding-left:1.5px">Schattiert</div><div class="dd" style="left:839.3px;top:747px;width:20.6px;height:22px"><svg width="11" height="7" viewBox="0 0 11 7"><path d="M1 1L5.5 5.5L10 1" fill="none" stroke="#555" stroke-width="1.3"/></svg></div>
<!-- FORM-LEFT -->
<div class="a tb" id="stdbtn">Standardlayout<br>überschreiben</div>
<div class="a sb dr" style="left:913.5px;top:288px;font-size:18.5px;line-height:24px">Demonstrationsbereich - Interaktiv</div>
<div class="box3d" id="demobox"></div>
<div class="a" id="demohead"></div><div class="a tb" style="left:935.5px;top:335px;font-size:18.7px;line-height:24px;color:#808080">DEMO Vorschau Überschrift (+4 Pix)</div>
<div class="a tb dr" style="left:935px;top:380.5px;font-size:18.5px;line-height:24px">Überschrift</div>
<div class="a" id="btnouter"></div><div class="a" id="btninner"></div><div class="a tb" style="left:1344.5px;top:393px;font-size:23.3px;line-height:28px;color:#803030">Buttontext</div>
<div class="lbl3d gr" style="left:933px;top:412.8px;width:161.5px;height:26.5px;color:#909090">Eingabfelder</div>
<div class="lbl3d" style="left:1098px;top:412.8px;width:134px;height:26.5px;background:#D9D9D9">Normales Feld</div><div class="lbl3d" style="left:1231px;top:412.8px;width:62.5px;height:26.5px;background:#D9D9D9"></div>
<div class="box3d" style="left:928px;top:451.5px;width:374px;height:81px"></div>
<div class="lbl3d" style="left:931.5px;top:460.4px;width:163px;height:26px">Pflichtfelder</div>
<div class="lbl3d" style="left:1098px;top:460.4px;width:134px;height:26px;background:#FFF8E1">Pflicht ABCD</div><div class="lbl3d" style="left:1231px;top:460.4px;width:62.5px;height:26px;background:#FFF8E1"></div>
<div class="lbl3d gr" style="left:931.5px;top:496px;width:163px;height:26px;color:#909090">Selektionsfelder</div>
<div class="lbl3d" style="left:1098px;top:496px;width:134px;height:26px;background:#D9D9D9">Combobox</div><div class="lbl3d" style="left:1231px;top:496px;width:62.5px;height:26px;background:#D9D9D9"></div><div class="dd" style="left:1270px;top:498.5px;width:21px;height:21.5px"><svg width="11" height="7" viewBox="0 0 11 7"><path d="M1 1L5.5 5.5L10 1" fill="none" stroke="#555" stroke-width="1.3"/></svg></div>
<div class="a th" style="left:1307.5px;top:439.5px;color:#2F8585;line-height:22.6px;white-space:normal;width:205px;letter-spacing:0.15px">'Überschrift',<br>'Pflichtfeld', 'Hilfen' im<br>Feld Tag (Marke), um<br>Feldarten zu<br>unterscheiden.</div>
<div class="a" style="left:1100px;top:573px;width:151.7px;height:88.5px;background:#fff;border:1px solid #8A9FC4"></div>
<div class="a" style="left:1100px;top:534px;width:139px;height:40px;background:#fff;border:1px solid #8A9FC4;border-bottom:none;border-radius:4px 4px 0 0"></div>
<div class="a tb tabt" style="left:1149px;top:539.5px">Seite 2</div>
<div class="lbl3d gr" style="left:1273px;top:551px;width:220px;height:23.5px;line-height:24px;color:#909090;border-bottom-width:0;letter-spacing:0.02px">Listenfelder (Größe -1 Pix)</div>
<div class="a" style="left:1272.5px;top:574.5px;width:238px;height:85px;background:#fff;border-style:solid;border-width:2px 1px 1px 2px;border-color:#6f6f6f #f6f6f6 #f6f6f6 #6f6f6f"></div>
<div class="a" style="left:1373px;top:577px;width:1px;height:82px;background:#dcdcdc"></div>
<div class="a th" style="left:1279.5px;top:579px;line-height:23.6px;letter-spacing:-0.3px">Listenfeld<br>Listfield</div><div class="a th" style="left:1379px;top:579px;line-height:23.6px;letter-spacing:-0.3px">Farbe ändern<br>Change Colour</div>
<div class="box3d" style="left:1277px;top:845px;width:246px;height:102px;background:#D8D8D8"></div>
<div class="a th gr" style="left:1288.5px;top:851px;line-height:24px;color:#909090">Timestamp</div><div class="a th gr" style="left:1418.5px;top:851px;line-height:24px;color:#909090">letzter User</div>
<div class="lbl3d" style="left:1285.5px;top:879.5px;width:225px;height:26px;line-height:24px;background:#D9D9D9;letter-spacing:0.28px">17.06.2021 18:12:59</div>
<div class="lbl3d" style="left:1285.5px;top:913px;width:225px;height:26.5px;line-height:24px;background:#D9D9D9;letter-spacing:0">Oliver BP-STATION-NEU</div>
<!-- FORM-RIGHT -->
<div class="a" id="dlg"><div class="a" id="dlgtitle"></div>
<div class="a dt" style="left:10.5px;top:9.5px;line-height:18px;letter-spacing:0">Farbe</div>
<div class="a dt" style="left:186px;top:9.5px;line-height:18px;font-size:16px">?</div>
<svg class="ico" style="left:239px;top:10.5px" width="15" height="15" viewBox="0 0 15 15"><path d="M1 1L14 14M14 1L1 14" stroke="#111" stroke-width="1.3"/></svg>
<div class="a dt" style="left:8.5px;top:46.5px;line-height:18px">Grundfarben:</div>
<div class="sw" style="left:13.0px;top:70.5px;background:#FF8080"></div><div class="sw" style="left:45.5px;top:70.5px;background:#FFFF80"></div><div class="sw" style="left:78.0px;top:70.5px;background:#80FF80"></div><div class="sw" style="left:110.5px;top:70.5px;background:#00FF80"></div><div class="sw" style="left:143.0px;top:70.5px;background:#80FFFF"></div><div class="sw" style="left:175.5px;top:70.5px;background:#0080FF"></div><div class="sw" style="left:208.0px;top:70.5px;background:#FF80C0"></div><div class="sw" style="left:240.5px;top:70.5px;background:#FF80FF"></div>
<div class="sw" style="left:13.0px;top:98.0px;background:#FF0000"></div><div class="sw" style="left:45.5px;top:98.0px;background:#FFFF00"></div><div class="sw" style="left:78.0px;top:98.0px;background:#80FF00"></div><div class="sw" style="left:110.5px;top:98.0px;background:#00FF40"></div><div class="sw" style="left:143.0px;top:98.0px;background:#00FFFF"></div><div class="sw" style="left:175.5px;top:98.0px;background:#0080C0"></div><div class="sw" style="left:208.0px;top:98.0px;background:#8080C0"></div><div class="sw" style="left:240.5px;top:98.0px;background:#FF00FF"></div>
<div class="sw" style="left:13.0px;top:125.5px;background:#804040"></div><div class="sw" style="left:45.5px;top:125.5px;background:#FF8040"></div><div class="sw" style="left:78.0px;top:125.5px;background:#00FF00"></div><div class="sw" style="left:110.5px;top:125.5px;background:#008080"></div><div class="sw" style="left:143.0px;top:125.5px;background:#004080"></div><div class="sw" style="left:175.5px;top:125.5px;background:#8080FF"></div><div class="sw" style="left:208.0px;top:125.5px;background:#800040"></div><div class="sw" style="left:240.5px;top:125.5px;background:#FF0080"></div>
<div class="sw" style="left:13.0px;top:153.0px;background:#800000"></div><div class="sw" style="left:45.5px;top:153.0px;background:#FF8000"></div><div class="sw" style="left:78.0px;top:153.0px;background:#008000"></div><div class="sw" style="left:110.5px;top:153.0px;background:#008040"></div><div class="sw" style="left:143.0px;top:153.0px;background:#0000FF"></div><div class="sw" style="left:175.5px;top:153.0px;background:#0000A0"></div><div class="sw" style="left:208.0px;top:153.0px;background:#800080"></div><div class="sw" style="left:240.5px;top:153.0px;background:#8000FF"></div>
<div class="sw" style="left:13.0px;top:180.5px;background:#400000"></div><div class="sw" style="left:45.5px;top:180.5px;background:#804000"></div><div class="sw" style="left:78.0px;top:180.5px;background:#004000"></div><div class="sw" style="left:110.5px;top:180.5px;background:#004040"></div><div class="sw" style="left:143.0px;top:180.5px;background:#000080"></div><div class="sw" style="left:175.5px;top:180.5px;background:#000040"></div><div class="sw" style="left:208.0px;top:180.5px;background:#400040"></div><div class="sw" style="left:240.5px;top:180.5px;background:#400080"></div>
<div class="sw" style="left:13.0px;top:208.0px;background:#000000"></div><div class="sw" style="left:45.5px;top:208.0px;background:#808000"></div><div class="sw" style="left:78.0px;top:208.0px;background:#808040"></div><div class="sw" style="left:110.5px;top:208.0px;background:#808080"></div><div class="sw" style="left:143.0px;top:208.0px;background:#408080"></div><div class="sw" style="left:175.5px;top:208.0px;background:#C0C0C0"></div><div class="sw" style="left:208.0px;top:208.0px;background:#400040"></div><div class="sw" style="left:240.5px;top:208.0px;background:#FFFFFF"></div>
<div class="a" style="left:9px;top:66.5px;width:32px;height:28.5px;border:1px dotted #000"></div><div class="a" style="left:12px;top:69.5px;width:26px;height:22px;border:1px solid #000;border-width:1px 1px 2px 1px"></div>
<div class="a dt" style="left:8.5px;top:251px;line-height:18px;letter-spacing:0">Benutzerdefinierte Farben:</div>
<div class="sw" style="left:13.0px;top:275.5px;background:#000"></div><div class="sw" style="left:45.5px;top:275.5px;background:#000"></div><div class="sw" style="left:78.0px;top:275.5px;background:#000"></div><div class="sw" style="left:110.5px;top:275.5px;background:#000"></div><div class="sw" style="left:143.0px;top:275.5px;background:#000"></div><div class="sw" style="left:175.5px;top:275.5px;background:#000"></div><div class="sw" style="left:208.0px;top:275.5px;background:#000"></div><div class="sw" style="left:240.5px;top:275.5px;background:#000"></div>
<div class="sw" style="left:13.0px;top:303.2px;background:#000"></div><div class="sw" style="left:45.5px;top:303.2px;background:#000"></div><div class="sw" style="left:78.0px;top:303.2px;background:#000"></div><div class="sw" style="left:110.5px;top:303.2px;background:#000"></div><div class="sw" style="left:143.0px;top:303.2px;background:#000"></div><div class="sw" style="left:175.5px;top:303.2px;background:#000"></div><div class="sw" style="left:208.0px;top:303.2px;background:#000"></div><div class="sw" style="left:240.5px;top:303.2px;background:#000"></div>
<div class="wbtn" style="left:9.5px;top:344px;width:260px;height:25.5px;line-height:24px;letter-spacing:0.15px">Farben definieren &gt;&gt;</div>
<div class="wbtn" style="left:42px;top:377px;width:91px;height:25.5px;line-height:23px;letter-spacing:0;border:2px solid #0078D7">OK</div>
<div class="wbtn" style="left:147px;top:377px;width:93px;height:25.5px;line-height:25px;letter-spacing:0.1px">Abbrechen</div>
</div>
<!-- DIALOG -->
</body>
</html>
